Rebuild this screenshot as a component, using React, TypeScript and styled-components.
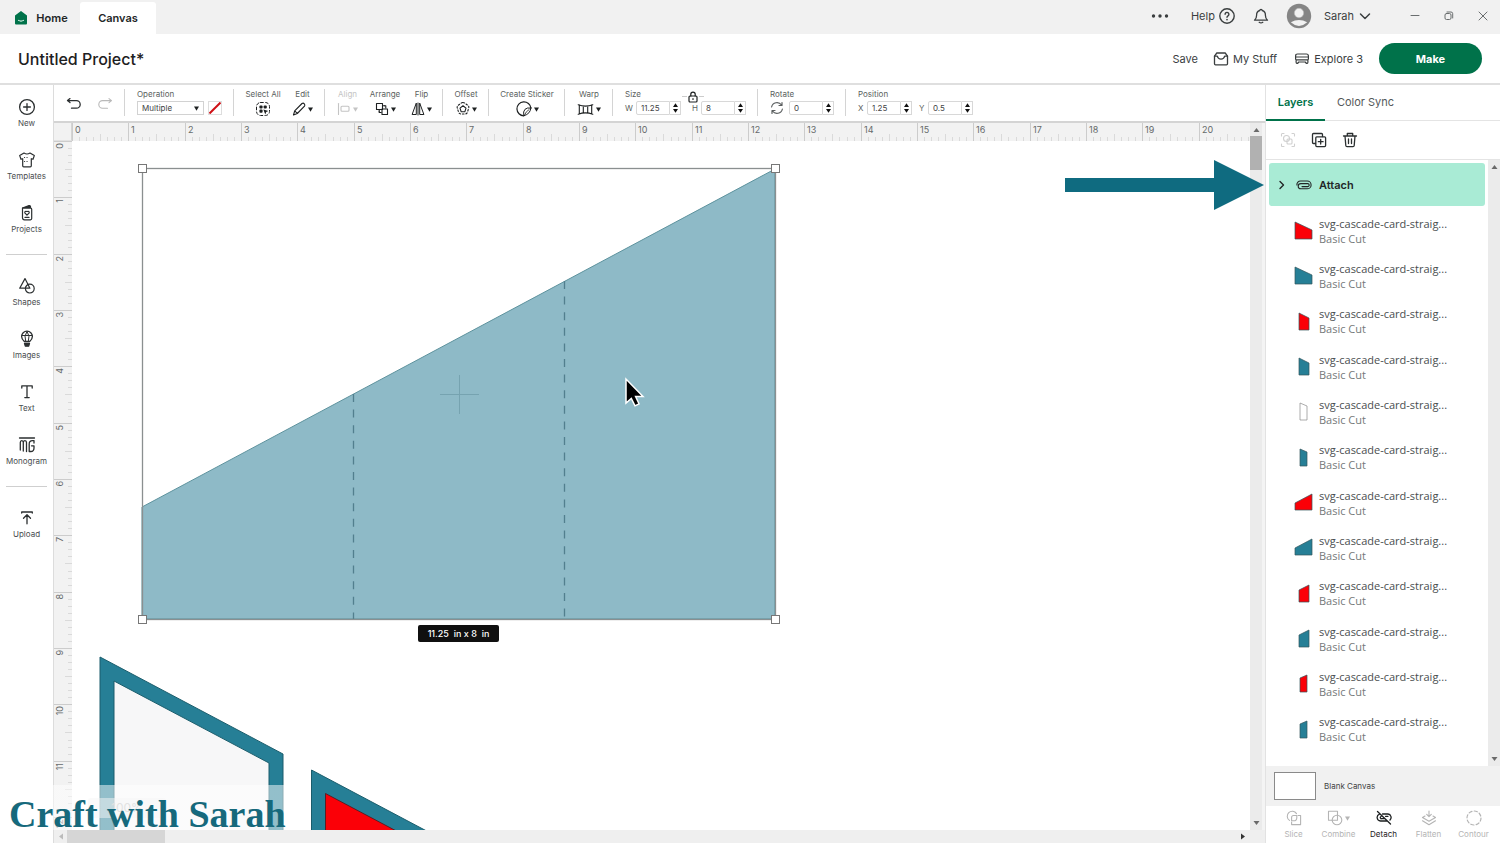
import React from "react";
import styled, { createGlobalStyle } from "styled-components";

const GlobalStyle = createGlobalStyle`
  *, *::before, *::after { box-sizing: border-box; }
  html, body, #root { height: 100%; }
  body {
    margin: 0;
    background: #ffffff;
    color: #3f4344;
    font-family: Inter, "Liberation Sans", sans-serif;
    font-size: 11px;
  }
  button, input, select { font: inherit; color: inherit; }
  button { border: 0; padding: 0; background: none; cursor: pointer; }
  a { color: inherit; text-decoration: none; }
  ul { list-style: none; margin: 0; padding: 0; }
  svg { display: block; flex: none; }
`;

/* ---------- icons ---------- */

type GlyphProps = {
  w?: number;
  h?: number;
  stroke?: number;
  children: React.ReactNode;
};

const Glyph = ({ w = 16, h = 16, stroke = 1.2, children }: GlyphProps) => (
  <svg
    width={w}
    height={h}
    viewBox={`0 0 ${w} ${h}`}
    fill="none"
    stroke="currentColor"
    strokeWidth={stroke}
    strokeLinecap="round"
    strokeLinejoin="round"
    aria-hidden="true"
  >
    {children}
  </svg>
);

const Caret = () => (
  <svg width="5" height="5" viewBox="0 0 5 5" aria-hidden="true">
    <path d="M0 .6h5L2.500 4.800z" fill="currentColor" />
  </svg>
);

const HomeIcon = () => (
  <svg width="14" height="14" viewBox="0 0 14 14" aria-hidden="true">
    <path d="M7 0 13 4.400V12.500q0 1-1 1H2q-1 0-1-1V4.400z" fill="#00724a" />
    <path d="M4.500 9.400q2.500 1.500 5 0" stroke="#d8f3e6" strokeWidth="1.100" fill="none" strokeLinecap="round" />
  </svg>
);

const HelpIcon = () => (
  <Glyph stroke={1.4}>
    <circle cx="8" cy="8" r="7.200" />
    <path d="M6.100 6.300a1.900 1.900 0 1 1 2.900 1.600q-1 .6-1 1.400" />
    <path d="M8 11.500v.1" strokeWidth="1.700" />
  </Glyph>
);

const BellIcon = () => (
  <Glyph stroke={1.3}>
    <path d="M1.500 12.200h13q-2.100-1.700-2.100-5A4.300 4.600 0 0 0 9.200 2.500a1.200 1.200 0 0 0-2.400 0A4.300 4.600 0 0 0 3.600 7.200q0 3.300-2.100 5z" />
    <path d="M6.200 14.300q1.800 1.300 3.600 0" />
  </Glyph>
);

const AvatarIcon = () => (
  <svg width="26" height="26" viewBox="0 0 26 26" aria-hidden="true">
    <circle cx="13" cy="13" r="12.200" fill="#858585" />
    <circle cx="13" cy="10" r="4.700" fill="#f1f1f1" stroke="#b5b5b5" strokeWidth=".6" />
    <path d="M4.800 19.300q8.200-4.700 16.400 0-8.200 7.400-16.400 0z" fill="#f1f1f1" />
  </svg>
);

const TrayIcon = () => (
  <Glyph stroke={1.3}>
    <path d="M1.500 5.200 3.800 2h8.400l2.300 3.200v7.600q0 1-1 1h-11q-1 0-1-1z" />
    <path d="M1.500 5.200h2.800q.8 3 3.700 3t3.700-3h2.800" />
  </Glyph>
);

const MachineIcon = () => (
  <Glyph stroke={1.2}>
    <path d="M1.600 8V5q0-2 2-2h8.800q2 0 2 2v3q0 .8-1 .8H2.600q-1 0-1-.8zM1.600 6h12.800M2.100 8.800v2.400q0 1.300 1.400 1.300l1.300-1.500h6.400l1.300 1.500q1.400 0 1.400-1.300V8.800" />
  </Glyph>
);

const navIcons: Record<string, React.ReactNode> = {
  New: (
    <Glyph w={18} h={18} stroke={1.3}>
      <circle cx="9" cy="9" r="7.400" />
      <path d="M9 5.600v6.800M5.600 9h6.800" />
    </Glyph>
  ),
  Templates: (
    <Glyph w={18} h={18} stroke={1.2}>
      <path d="M6 2 1.700 4.600 3 8.300l1.700-.6v7.100q0 1 1 1h6.600q1 0 1-1V7.700l1.700.6 1.300-3.700L12 2q-3 2-6 0z" />
      <path d="M6.500 6.500h5M6.500 10.500h5" strokeDasharray=".1 2.400" />
    </Glyph>
  ),
  Projects: (
    <Glyph w={18} h={18} stroke={1.2}>
      <path d="M4.500 4h8q1.200 0 1.200 1.200v9.400q0 1.200-1.200 1.200h-6q-2 0-2-2z" />
      <path d="M4.500 4 11 1.600q1.200-.3 1.500 1V4z" fill="currentColor" />
      <path d="M9 11.200 6.800 8.800q-.3-2 2.200-1.300 2.500-.7 2.200 1.300zM7 13.400h4" />
    </Glyph>
  ),
  Shapes: (
    <Glyph w={18} h={18} stroke={1.2}>
      <path d="M7 1.600 1.700 11.200h10.200z" />
      <circle cx="11.800" cy="11.600" r="4.400" />
    </Glyph>
  ),
  Images: (
    <Glyph w={18} h={18} stroke={1.3}>
      <path d="M6.300 11.500Q3.600 9.200 3.600 6.600a5.400 5.400 0 0 1 10.800 0q0 2.600-2.700 4.900z" />
      <path d="M7.600 11.300Q5.700 5.800 9 1.400q3.300 4.400 1.400 9.900M4 5.500h10" strokeWidth="1" />
      <path d="M6.500 13.300h5l-.8 2.900H7.300z" fill="currentColor" />
    </Glyph>
  ),
  Text: (
    <Glyph w={18} h={18} stroke={1.3}>
      <path d="M3.800 5V2.800h10.400V5M9 2.800v11.800M6.800 14.600h4.400" />
    </Glyph>
  ),
  Monogram: (
    <Glyph w={18} h={18} stroke={1.300}>
      <path d="M1.500 2h15M2.300 14V6.500Q2.300 4.600 3.800 4.600T5.300 6.500V15M5.300 6.500Q5.300 4.600 6.900 4.600T8.500 6.500V15.500M16 7V4.600h-1.500q-3.300 0-3.300 3.400v7.500h1.600q3.200 0 3.200-3.500v-2.200h-2.500" />
    </Glyph>
  ),
  Upload: (
    <Glyph w={18} h={18} stroke={1.300}>
      <path d="M3.700 4V3h10.600v1M9 14.800V6M5.500 9.300 9 5.800l3.500 3.500" />
    </Glyph>
  ),
};

const UndoIcon = () => (
  <Glyph stroke={1.3}>
    <path d="M1.800 5.600h8.600a3.800 3.800 0 0 1 0 7.600H5.500M1.500 5.600l2.500-2M1.500 5.600l2.500 2" />
  </Glyph>
);
const RedoIcon = () => (
  <Glyph stroke={1.1}>
    <path d="M14.200 5.600H5.600a3.800 3.800 0 0 0 0 7.600h4.900M14.500 5.600l-2.500-2M14.500 5.600l-2.500 2" />
  </Glyph>
);
const SelectAllIcon = () => (
  <Glyph stroke={1}>
    <rect x="1.500" y="1.500" width="13" height="13" rx="4" strokeDasharray="2.800 2.200" />
    <g fill="currentColor" stroke="none">
      <rect x="4.400" y="4.400" width="3.200" height="3.200" rx="1" />
      <rect x="8.600" y="4.400" width="3.200" height="3.200" rx="1" />
      <rect x="4.400" y="8.600" width="3.200" height="3.200" rx="1" />
      <path d="m8.400 8.400 5 1.700-2.200 1-.9 2.300z" />
    </g>
  </Glyph>
);
const PencilIcon = () => (
  <Glyph w={14} stroke={1.1}>
    <path d="m1.500 14 1.200-4.200L10 2.500q1.300-.8 2.300.3t.2 2.300l-7.200 7.400zM2.700 9.800l2.600 2.600" />
  </Glyph>
);
const AlignIcon = () => (
  <Glyph w={14} stroke={1.1}>
    <path d="M1.500 2.500v11" />
    <rect x="4" y="5.300" width="8" height="5" rx="1" />
  </Glyph>
);
const ArrangeIcon = () => (
  <Glyph w={14} stroke={1.1}>
    <rect x="1.500" y="2.500" width="6" height="6" />
    <path d="M9.500 4.800h1.300V7M4.200 10.300v1.200h2" />
    <rect x="7" y="8" width="5.500" height="5.500" />
    <path d="M4.200 8.500v1.800M7.500 4.800h2" />
  </Glyph>
);
const FlipIcon = () => (
  <Glyph w={14} stroke={1}>
    <path d="M5.300 2.500v11H1.500zM8.700 2.500v11h3.800zM7 2v12" />
  </Glyph>
);
const OffsetIcon = () => (
  <Glyph w={14} stroke={1.1}>
    <path d="M7 1.500q1.200 0 2.300 1l2.500 1.800q1.500 1 .9 2.800l-1.200 3.900q-.6 2-2.500 2H5q-1.900 0-2.500-2L1.300 7.100q-.6-1.800.9-2.800l2.500-1.800q1.100-1 2.300-1z" strokeDasharray="1.600 1.800" />
    <path d="m7 4.800 3 2.300-1.200 3.700H5.200L4 7.100z" />
  </Glyph>
);
const StickerIcon = () => (
  <Glyph w={16} stroke={1.200}>
    <path d="M14.900 7A7 7 0 1 0 7.800 14.800" />
    <path d="M14.900 7Q14.500 12.800 7.800 14.800 6.900 10.400 9 8.300 11 6.400 14.900 7z" strokeWidth="1" />
    <path d="M8.500 14q1.400-3.700 4.600-5.500" strokeWidth=".8" />
  </Glyph>
);
const WarpIcon = () => (
  <Glyph w={17} stroke={1.1}>
    <path d="M1.200 3.800q7.300 2.600 14.600 0M1.200 13.200q7.300-2.600 14.600 0M2.300 4v9M14.700 4v9M6.300 5v7M10.700 5v7" />
  </Glyph>
);
const LockIcon = () => (
  <Glyph w={10} h={12} stroke={1.200}>
    <rect x="1" y="5" width="8" height="6" rx="1" />
    <path d="M2.800 5V3.300a2.200 2.200 0 0 1 4.400 0V5M5 7.500v1" />
  </Glyph>
);
const RotateIcon = () => (
  <Glyph w={14} h={14} stroke={1.200}>
    <path d="M1.600 6A5.500 5.500 0 0 1 11.500 4M12.400 8A5.500 5.500 0 0 1 2.500 10M12 1.500v3H9M2 12.500v-3h3" />
  </Glyph>
);
const GroupIcon = () => (
  <Glyph stroke={1.1}>
    <path d="M1.500 4V1.500H4M12 1.500h2.500V4M14.500 12v2.500H12M4 14.500H1.500V12" strokeDasharray="2 1" />
    <circle cx="6.500" cy="6.500" r="3" />
    <rect x="7" y="7" width="5" height="5" rx="1" />
  </Glyph>
);
const DuplicateIcon = () => (
  <Glyph stroke={1.3}>
    <path d="M4.500 11.500h-2q-1 0-1-1v-8q0-1 1-1h8q1 0 1 1v2" />
    <rect x="4.800" y="4.800" width="9.800" height="9.800" rx="1" />
    <path d="M9.700 7.300v4.800M7.300 9.700h4.800" />
  </Glyph>
);
const TrashIcon = () => (
  <Glyph stroke={1.300}>
    <path d="M1.500 4h13M5.300 4V1.500h5.400V4M3 4l.8 9.500q.1 1.200 1.200 1.200h6q1.100 0 1.200-1.200L13 4M6.500 7v4.500M9.500 7v4.500" />
  </Glyph>
);
const ClipIcon = () => (
  <Glyph w={16} h={10} stroke={1.100}>
    <path d="M6 6.600h5.700a1.500 1.500 0 0 0 0-3H4.800a2.600 2.600 0 0 0 0 5.200h6.400a3.900 3.900 0 0 0 0-7.800H4.600A3.700 3.700 0 0 0 .9 5" />
  </Glyph>
);

const opIcons: Record<string, React.ReactNode> = {
  Slice: (
    <Glyph stroke={1.1}>
      <path d="M3.500 10.400A5 5 0 1 1 10.500 3.600M5.600 12v2.600h9V5.500H12" />
      <path d="M5.600 10.800V7.500q0-2 2-2h3.200v2.200q0 3.100-3.200 3.100z" />
    </Glyph>
  ),
  Combine: (
    <Glyph stroke={1.1}>
      <path d="M5 10.300H1.500v-9h9V5" />
      <circle cx="10" cy="10" r="4.800" />
      <path d="M5.200 10.300h5.300V5.200" />
    </Glyph>
  ),
  Detach: (
    <Glyph stroke={1.300}>
      <path d="M1.500 1.500 14.500 14M6.500 4H12a3.500 3.500 0 0 1 2 6M11 11H4.500a3.500 3.500 0 0 1-1-6.800M5 8.700h4M9.500 6.300H12M5 6.500q-1.500.9 0 2.200" />
    </Glyph>
  ),
  Flatten: (
    <Glyph stroke={1.1}>
      <path d="M8 1v5.500M5.700 4.300 8 6.600l2.300-2.300M4 6 1.500 7.500 8 11.300l6.500-3.800L12 6M1.500 10.800 8 14.800l6.500-4" />
    </Glyph>
  ),
  Contour: (
    <Glyph stroke={1.200}>
      <circle cx="8" cy="8" r="7" strokeDasharray="3.200 2.300" />
    </Glyph>
  ),
};

/* ---------- shell ---------- */

const Shell = styled.div`
  display: flex;
  flex-direction: column;
  height: 100vh;
  min-height: 700px;
  overflow: hidden;
`;

const TitleBar = styled.header`
  flex: none;
  display: flex;
  align-items: flex-end;
  height: 34px;
  padding-right: 10px;
  background: #f1f1f1;
`;

const WindowTab = styled.a<{ $active?: boolean }>`
  display: flex;
  align-items: center;
  justify-content: center;
  gap: 8px;
  width: ${(p) => (p.$active ? "76px" : "80px")};
  height: 32px;
  padding-left: ${(p) => (p.$active ? "0" : "2px")};
  border-radius: 3px 3px 0 0;
  background: ${(p) => (p.$active ? "#ffffff" : "transparent")};
  color: #232627;
  font-weight: 600;
`;

const WindowTools = styled.div`
  display: flex;
  align-items: center;
  align-self: flex-start;
  height: 32px;
  margin-left: auto;
`;

const BarButton = styled.button<{ $after: number; $faint?: boolean }>`
  display: flex;
  align-items: center;
  gap: 4px;
  margin-right: ${(p) => p.$after}px;
  color: ${(p) => (p.$faint ? "#6a6e6f" : "#3a3e3f")};
  font-size: 11px;
`;

const ProjectBar = styled.div`
  flex: none;
  display: flex;
  align-items: center;
  height: 51px;
  padding: 0 18px;
  border-bottom: 2px solid #dfdfdf;
`;

const ProjectName = styled.h1`
  margin: 0 auto 0 0;
  color: #1d2021;
  font-size: 16px;
  font-weight: 500;
`;

const MakeButton = styled.button`
  width: 103px;
  height: 31px;
  border-radius: 16px;
  background: #00724a;
  color: #ffffff;
  font-weight: 700;
`;

const Body = styled.div`
  flex: 1;
  display: flex;
  min-height: 0;
`;

/* ---------- left navigation ---------- */

const Nav = styled.nav`
  flex: none;
  width: 54px;
  border-right: 1px solid #dcdcdc;
`;

const NavButton = styled.button`
  display: flex;
  flex-direction: column;
  align-items: center;
  gap: 2px;
  width: 53px;
  height: 53px;
  padding-top: 13px;
  color: #2b2f30;
  font-size: 8px;
  line-height: 10px;
`;

const NavLabel = styled.span`
  color: #4a4e4f;
`;

const NavRule = styled.hr`
  height: 1px;
  margin: 10px 6px 9px;
  border: 0;
  background: #cfcfcf;
`;

/* ---------- toolbar ---------- */

const Centre = styled.main`
  position: relative;
  flex: 1;
  display: flex;
  flex-direction: column;
  min-width: 0;
`;

const Toolbar = styled.div`
  flex: none;
  display: flex;
  align-items: flex-start;
  height: 38px;
  padding-top: 4px;
  border-bottom: 2px solid #d4d4d4;
  font-size: 8px;
`;

const ToolGroup = styled.div<{ $gap?: number; $last?: boolean }>`
  position: relative;
  display: flex;
  gap: ${(p) => p.$gap ?? 12}px;
  height: 27px;
  padding: 0 11px 0 12px;
  border-right: ${(p) => (p.$last ? "0" : "1px solid #d4d4d4")};
`;

const HistoryButton = styled.button<{ $off?: boolean }>`
  align-self: center;
  color: ${(p) => (p.$off ? "#b9b9b9" : "#2b2f30")};
`;

const Tool = styled.div<{ $w: number }>`
  display: flex;
  flex-direction: column;
  width: ${(p) => p.$w}px;
`;

const ToolLabel = styled.span`
  height: 12px;
  color: #5b5f60;
  line-height: 10px;
  white-space: nowrap;
`;

const ToolButton = styled.button<{ $w: number; $off?: boolean }>`
  display: flex;
  flex-direction: column;
  align-items: center;
  width: ${(p) => p.$w}px;
  height: 28px;
  color: ${(p) => (p.$off ? "#c4c4c4" : "#1d2021")};

  ${ToolLabel} {
    color: ${(p) => (p.$off ? "#c4c4c4" : "#5b5f60")};
  }
`;

const ToolFace = styled.span`
  display: flex;
  align-items: center;
  gap: 2px;
  height: 16px;
`;

const FieldRow = styled.div<{ $gap: number }>`
  display: flex;
  align-items: center;
  gap: ${(p) => p.$gap}px;
  height: 16px;
`;

const SelectWrap = styled.span`
  position: relative;
  display: flex;
  align-items: center;

  svg {
    position: absolute;
    right: 5px;
    color: #1d2021;
    pointer-events: none;
  }
`;

const Select = styled.select`
  appearance: none;
  width: 67px;
  height: 14px;
  padding: 0 4px;
  border: 1px solid #d2d2d2;
  border-radius: 0;
  background: #ffffff;
  line-height: 12px;
`;

const NoFill = styled.button`
  border: 1px solid #dddddd;
`;

const Field = styled.label`
  display: flex;
  align-items: center;
  color: #5b5f60;
`;

const FieldName = styled.span<{ $w: number }>`
  width: ${(p) => p.$w}px;
`;

const NumberInput = styled.input`
  width: 34px;
  height: 14px;
  padding: 0 4px;
  border: 1px solid #d8d8d8;
  border-radius: 2px 0 0 2px;
  outline: 0;
  background: #ffffff;
  color: #3f4344;
`;

const Stepper = styled.span`
  display: flex;
  align-items: center;
  justify-content: center;
  width: 11px;
  height: 14px;
  border: 1px solid #d8d8d8;
  border-left: 0;
  color: #111111;
`;

/* Sits above the gap between the width and height fields. */
const LockButton = styled.button`
  position: absolute;
  left: 69px;
  top: 2px;
  display: flex;
  gap: 1px;
  color: #1d2021;
`;

const LockTie = styled.span`
  width: 5px;
  height: 4px;
  margin-top: 5px;
  border-top: 1px solid #cccccc;
`;

/* ---------- canvas ---------- */

const CanvasArea = styled.div`
  flex: 1;
  display: flex;
  min-height: 0;
`;

const CanvasGrid = styled.div`
  flex: 1;
  display: grid;
  grid-template-columns: 18px 1fr;
  grid-template-rows: 18px 1fr;
  min-width: 0;
  min-height: 0;
`;

const Corner = styled.div`
  background: #f2f2f2;
  border-right: 1px solid #d4d4d4;
  border-bottom: 1px solid #e2e2e2;
`;

const RulerStrip = styled.div`
  overflow: hidden;
  min-width: 0;
  min-height: 0;
  background: #f2f2f2;
`;

const Mat = styled.div`
  position: relative;
  overflow: hidden;
  min-height: 0;
  background: #ffffff;
`;

const SizeBadge = styled.div`
  position: absolute;
  left: 346px;
  top: 484px;
  width: 81px;
  border-radius: 2px;
  background: #101010;
  color: #ffffff;
  font-size: 9px;
  font-weight: 500;
  line-height: 17px;
  text-align: center;
  white-space: pre;
`;

const Pointer = styled.svg`
  position: absolute;
  left: 552px;
  top: 236px;
`;

const ZoomLevel = styled.div`
  position: absolute;
  left: 16px;
  bottom: 12px;
  width: 78px;
  border-radius: 3px;
  background: rgba(236, 236, 236, 0.5);
  color: #c4c4c4;
  font-size: 12px;
  line-height: 20px;
  text-align: center;
`;

const VScroll = styled.div<{ $edge?: boolean }>`
  flex: none;
  display: flex;
  flex-direction: column;
  align-items: center;
  justify-content: space-between;
  width: ${(p) => (p.$edge ? 15 : 12)}px;
  padding: 5px 0;
  border-right: ${(p) => (p.$edge ? "3px solid #f4f4f4" : "0")};
  background: #ebebeb;
  color: #6a6a6a;
`;

const VThumb = styled.div`
  width: 12px;
  height: 34px;
  margin: 4px 0 auto;
  background: #b1b1b1;
`;

const HScroll = styled.div`
  flex: none;
  display: flex;
  align-items: center;
  height: 13px;
  padding: 0 20px 0 5px;
  background: #efefef;
  color: #333333;
`;

const HThumb = styled.div`
  width: 98px;
  height: 13px;
  margin: 0 auto 0 4px;
  background: #d6d6d6;
`;

const Callout = styled.svg`
  position: absolute;
  right: 1px;
  top: 75px;
`;

const Watermark = styled.div`
  position: absolute;
  left: 0;
  bottom: 0;
  width: 284px;
  height: 58px;
  padding: 6px 0 0 9px;
  background: linear-gradient(rgba(255, 255, 255, 0.5) 45px, transparent 45px);
  color: #16697c;
  font-family: "Liberation Serif", serif;
  font-size: 38px;
  font-weight: 700;
  line-height: 46px;
  white-space: nowrap;
  pointer-events: none;
`;

/* ---------- layers panel ---------- */

const Panel = styled.aside`
  flex: none;
  display: flex;
  flex-direction: column;
  width: 235px;
  border-left: 1px solid #e2e2e2;
`;

const PanelTabs = styled.div`
  flex: none;
  display: flex;
  height: 36px;
  border-bottom: 1px solid #e4e4e4;
`;

const PanelTab = styled.button<{ $active?: boolean; $w: number }>`
  width: ${(p) => p.$w}px;
  height: 36px;
  border-bottom: 2px solid ${(p) => (p.$active ? "#00724a" : "transparent")};
  color: ${(p) => (p.$active ? "#00724a" : "#55595a")};
  font-weight: ${(p) => (p.$active ? 600 : 400)};
`;

const PanelActions = styled.div`
  flex: none;
  display: flex;
  align-items: center;
  gap: 15px;
  height: 39px;
  padding-left: 14px;
  border-bottom: 1px solid #e4e4e4;
`;

const IconButton = styled.button<{ $off?: boolean }>`
  color: ${(p) => (p.$off ? "#d0d0d0" : "#2b2f30")};
`;

const PanelScroll = styled.div`
  flex: 1;
  display: flex;
  min-height: 0;
`;

const LayerColumn = styled.div`
  flex: 1;
  display: flex;
  flex-direction: column;
  min-width: 0;
  padding: 3px 3px 14px;
`;

const AttachRow = styled.button`
  flex: none;
  display: flex;
  align-items: center;
  height: 43px;
  padding-left: 8px;
  border-radius: 3px;
  background: #a9ebd5;
  color: #232627;
  font-weight: 600;

  svg:first-child { margin-right: 10px; }
  svg + svg { margin-right: 7px; }
`;

const LayerList = styled.ul`
  flex: 1;
  display: grid;
  grid-auto-rows: 1fr;
  padding-top: 2px;
`;

const LayerRow = styled.li`
  display: flex;
  align-items: center;
  gap: 6px;
  padding-left: 25px;
`;

const LayerText = styled.div`
  font-family: "Open Sans", "Liberation Sans", sans-serif;
  font-size: 11px;
  line-height: 15px;
`;

const LayerName = styled.div`
  color: #4a4e4f;
`;

const LayerKind = styled.div`
  color: #75797a;
`;

const CanvasColor = styled.div`
  flex: none;
  display: flex;
  align-items: center;
  gap: 8px;
  height: 40px;
  padding-left: 8px;
  background: #f1f1f1;
  font-size: 8px;
`;

const ColorSwatch = styled.button`
  width: 42px;
  height: 28px;
  border: 1px solid #8a8a8a;
  background: #ffffff;
`;

const Operations = styled.div`
  flex: none;
  display: flex;
  height: 37px;
  padding: 0 4px 0 5px;
`;

const OperationButton = styled.button<{ $on?: boolean }>`
  flex: 1;
  display: flex;
  flex-direction: column;
  align-items: center;
  justify-content: center;
  gap: 3px;
  color: ${(p) => (p.$on ? "#1d2021" : "#b4b4b4")};
  font-size: 8px;
  line-height: 10px;
`;

/* ---------- data ---------- */

const INCH = 56.33;
const TEAL = "#267f96";
const RED = "#fb0007";

const layers = [
  { shape: "1,1 18,9 18,18 1,18", fill: RED },
  { shape: "1,1 18,9 18,18 1,18", fill: TEAL },
  { shape: "5,1 15,6 15,18 5,18", fill: RED },
  { shape: "5,1 15,6 15,18 5,18", fill: TEAL },
  { shape: "6,1 13,4 13,18 6,18", fill: "#ffffff" },
  { shape: "6,1 13,4 13,18 6,18", fill: TEAL },
  { shape: "1,10 18,1 18,17 1,17", fill: RED },
  { shape: "1,10 18,1 18,17 1,17", fill: TEAL },
  { shape: "5,6 15,1 15,18 5,18", fill: RED },
  { shape: "5,6 15,1 15,18 5,18", fill: TEAL },
  { shape: "6,4 13,1 13,18 6,18", fill: RED },
  { shape: "6,4 13,1 13,18 6,18", fill: TEAL },
];

const navGroups = [
  ["New", "Templates", "Projects"],
  ["Shapes", "Images", "Text", "Monogram"],
  ["Upload"],
];

/* ---------- parts ---------- */

const Ruler = ({ vertical = false, last }: { vertical?: boolean; last: number }) => {
  const marks = Array.from({ length: (last + 1) * 8 }, (_, i) => i);
  return (
    <svg width={vertical ? 18 : 1240} height={vertical ? 1240 : 18} aria-hidden="true">
      {marks.map((i) => {
        const at = Math.round((i * INCH) / 8) + 0.5;
        const size = i % 8 === 0 ? 18 : i % 4 === 0 ? 7 : 4;
        const color = i % 8 === 0 ? "#cccccc" : "#dadada";
        return vertical ? (
          <line key={i} x1={18 - size} x2={18} y1={at} y2={at} stroke={color} />
        ) : (
          <line key={i} y1={18 - size} y2={18} x1={at} x2={at} stroke={color} />
        );
      })}
      {marks
        .filter((i) => i % 8 === 0)
        .map((i) => {
          const at = Math.round((i * INCH) / 8) + 3;
          return (
            <text
              key={i}
              fontSize="9"
              fill="#666a6b"
              x={vertical ? undefined : at}
              y={vertical ? undefined : 10}
              textAnchor={vertical ? "end" : "start"}
              transform={vertical ? `translate(9 ${at - 1}) rotate(-90)` : undefined}
            >
              {i / 8}
            </text>
          );
        })}
    </svg>
  );
};

const Artwork = () => (
  <svg width="100%" height="100%" aria-label="Cascade card pieces">
    <polygon points="70,366 703,28 703,478 70,478" fill="#8ebac7" stroke="#5d929d" />
    <path d="M281.500 253V478M492.500 140V478" stroke="#527f8e" strokeWidth="1.300" strokeDasharray="8 7.600" />
    <path d="M368 253.500h39M387.500 234v39" stroke="#76a3b0" />
    <rect x="70.500" y="27.500" width="633" height="451" fill="none" stroke="#8a8f90" strokeWidth="1.300" />
    {[
      [70, 27],
      [703, 27],
      [70, 478],
      [703, 478],
    ].map(([x, y]) => (
      <rect key={`${x}-${y}`} x={x - 3.5} y={y - 3.5} width="8" height="8" fill="#ffffff" stroke="#777777" />
    ))}
    <polygon points="28,516 211,613 211,1000 28,1000" fill={TEAL} stroke="#1b5d6c" />
    <polygon points="42,540 197,622 197,1000 42,1000" fill="#f7f7f8" stroke="#1b5d6c" />
    <polygon points="239.500,629 500,767 500,1000 239.500,1000" fill={TEAL} stroke="#1b5d6c" />
    <polygon points="253.500,652.500 500,783 500,1000 253.500,1000" fill={RED} stroke="#5b1d24" />
  </svg>
);

type NumberFieldProps = { name?: React.ReactNode; title: string; w: number; value: string };
const NumberField = ({ name, title, w, value }: NumberFieldProps) => (
  <Field>
    <FieldName $w={w}>{name}</FieldName>
    <NumberInput aria-label={title} defaultValue={value} />
    <Stepper>
      <svg width="5" height="10" viewBox="0 0 5 10" fill="currentColor" aria-hidden="true">
        <path d="M2.500 .3 5 4H0zM0 6h5L2.500 9.700z" />
      </svg>
    </Stepper>
  </Field>
);

const ScrollUp = () => (
  <svg width="7" height="4" viewBox="0 0 7 4" fill="currentColor" aria-hidden="true">
    <path d="M3.500 0 6.500 4h-6z" />
  </svg>
);
const ScrollDown = () => (
  <svg width="7" height="4" viewBox="0 0 7 4" fill="currentColor" aria-hidden="true">
    <path d="M.5 0h6l-3 4z" />
  </svg>
);

type DropToolProps = { label: string; w: number; off?: boolean; caret?: boolean; icon: React.ReactNode };
const DropTool = ({ label, w, off, caret = true, icon }: DropToolProps) => (
  <ToolButton $w={w} $off={off} disabled={off}>
    <ToolLabel>{label}</ToolLabel>
    <ToolFace>
      {icon}
      {caret && <Caret />}
    </ToolFace>
  </ToolButton>
);

export default function App() {
  return (
    <Shell>
      <GlobalStyle />
      <TitleBar>
        <WindowTab href="#home">
          <HomeIcon />
          Home
        </WindowTab>
        <WindowTab href="#canvas" $active>
          Canvas
        </WindowTab>
        <WindowTools>
          <BarButton $after={22} aria-label="More">
            <Glyph w={18} h={4} stroke={0}>
              <g fill="currentColor">
                <circle cx="2.500" cy="2" r="1.700" />
                <circle cx="9" cy="2" r="1.700" />
                <circle cx="15.500" cy="2" r="1.700" />
              </g>
            </Glyph>
          </BarButton>
          <BarButton $after={18}>
            Help
            <HelpIcon />
          </BarButton>
          <BarButton $after={17} aria-label="Notifications">
            <BellIcon />
          </BarButton>
          <BarButton $after={12} aria-label="Account">
            <AvatarIcon />
          </BarButton>
          <BarButton $after={38}>
            Sarah
            <Glyph w={14} h={10} stroke={1.500}>
              <path d="M2.500 3 7 7.500 11.500 3" />
            </Glyph>
          </BarButton>
          <BarButton $after={24} $faint aria-label="Minimise">
            <Glyph w={10} h={10} stroke={1}>
              <path d="M1 4.500h8" />
            </Glyph>
          </BarButton>
          <BarButton $after={24} $faint aria-label="Restore">
            <Glyph w={10} h={10} stroke={1}>
              <rect x="1" y="2.500" width="6" height="6" rx="1.500" />
              <path d="M3 1h4q1.700 0 1.700 1.700V7" />
            </Glyph>
          </BarButton>
          <BarButton $after={2} $faint aria-label="Close">
            <Glyph w={10} h={10} stroke={1}>
              <path d="m1 1 8 8M9 1 1 9" />
            </Glyph>
          </BarButton>
        </WindowTools>
      </TitleBar>

      <ProjectBar>
        <ProjectName>Untitled Project*</ProjectName>
        <BarButton $after={15}>Save</BarButton>
        <BarButton $after={17}>
          <TrayIcon />
          My Stuff
        </BarButton>
        <BarButton $after={16}>
          <MachineIcon />
          Explore 3
        </BarButton>
        <MakeButton>Make</MakeButton>
      </ProjectBar>

      <Body>
        <Nav>
          {navGroups.map((group, g) => (
            <React.Fragment key={g}>
              {g > 0 && <NavRule />}
              {group.map((label) => (
                <NavButton key={label}>
                  {navIcons[label]}
                  <NavLabel>{label}</NavLabel>
                </NavButton>
              ))}
            </React.Fragment>
          ))}
        </Nav>

        <Centre>
          <Toolbar>
            <ToolGroup $gap={15}>
              <HistoryButton aria-label="Undo">
                <UndoIcon />
              </HistoryButton>
              <HistoryButton $off aria-label="Redo">
                <RedoIcon />
              </HistoryButton>
            </ToolGroup>
            <ToolGroup>
              <Tool $w={85}>
                <ToolLabel as="label" htmlFor="operation">
                  Operation
                </ToolLabel>
                <FieldRow $gap={4}>
                  <SelectWrap>
                    <Select id="operation" defaultValue="Multiple">
                      <option>Multiple</option>
                    </Select>
                    <Caret />
                  </SelectWrap>
                  <NoFill aria-label="No fill">
                    <svg width="12" height="12" viewBox="0 0 12 12" aria-hidden="true">
                      <path d="M.5 11.500 11.500.5" stroke="#cf1016" strokeWidth="2" />
                    </svg>
                  </NoFill>
                </FieldRow>
              </Tool>
            </ToolGroup>
            <ToolGroup>
              <DropTool label="Select All" w={34} caret={false} icon={<SelectAllIcon />} />
              <DropTool label="Edit" w={21} icon={<PencilIcon />} />
            </ToolGroup>
            <ToolGroup>
              <DropTool label="Align" w={21} off icon={<AlignIcon />} />
              <DropTool label="Arrange" w={30} icon={<ArrangeIcon />} />
              <DropTool label="Flip" w={19} icon={<FlipIcon />} />
            </ToolGroup>
            <ToolGroup>
              <DropTool label="Offset" w={22} icon={<OffsetIcon />} />
            </ToolGroup>
            <ToolGroup>
              <DropTool label="Create Sticker" w={52} icon={<StickerIcon />} />
            </ToolGroup>
            <ToolGroup>
              <DropTool label="Warp" w={24} icon={<WarpIcon />} />
            </ToolGroup>
            <ToolGroup $gap={11}>
              <Tool $w={56}>
                <ToolLabel>Size</ToolLabel>
                <FieldRow $gap={0}>
                  <NumberField name="W" title="Width" w={11} value="11.25" />
                </FieldRow>
              </Tool>
              <Tool $w={54}>
                <ToolLabel />
                <FieldRow $gap={0}>
                  <NumberField name="H" title="Height" w={9} value="8" />
                </FieldRow>
              </Tool>
              <LockButton aria-label="Lock proportions">
                <LockTie />
                <LockIcon />
                <LockTie />
              </LockButton>
            </ToolGroup>
            <ToolGroup>
              <Tool $w={64}>
                <ToolLabel>Rotate</ToolLabel>
                <FieldRow $gap={0}>
                  <NumberField name={<RotateIcon />} title="Rotation" w={19} value="0" />
                </FieldRow>
              </Tool>
            </ToolGroup>
            <ToolGroup $last>
              <Tool $w={116}>
                <ToolLabel>Position</ToolLabel>
                <FieldRow $gap={7}>
                  <NumberField name="X" title="Horizontal position" w={9} value="1.25" />
                  <NumberField name="Y" title="Vertical position" w={9} value="0.5" />
                </FieldRow>
              </Tool>
            </ToolGroup>
          </Toolbar>

          <CanvasArea>
            <CanvasGrid>
              <Corner />
              <RulerStrip>
                <Ruler last={20} />
              </RulerStrip>
              <RulerStrip>
                <Ruler vertical last={12} />
              </RulerStrip>
              <Mat>
                <Artwork />
                <SizeBadge>11.25  in x 8  in</SizeBadge>
                <Pointer width="22" height="30" viewBox="0 0 22 30" aria-hidden="true">
                  <path
                    d="M2 2v24l5.300-4.600 3.700 7.400 4-2-3.400-7.200H19z"
                    fill="#000000"
                    stroke="#ffffff"
                    strokeWidth="1.500"
                  />
                </Pointer>
                <ZoomLevel>100%</ZoomLevel>
              </Mat>
            </CanvasGrid>
            <VScroll $edge>
              <ScrollUp />
              <VThumb />
              <ScrollDown />
            </VScroll>
          </CanvasArea>
          <HScroll>
            <svg width="4" height="7" viewBox="0 0 4 7" fill="#bbbbbb" aria-hidden="true">
              <path d="M4 .5v6l-4-3z" />
            </svg>
            <HThumb />
            <svg width="4" height="7" viewBox="0 0 4 7" fill="currentColor" aria-hidden="true">
              <path d="M0 .5v6l4-3z" />
            </svg>
          </HScroll>
          <Callout width="199" height="50" viewBox="0 0 199 50" aria-hidden="true">
            <path d="M0 18h149V0l50 25-50 25V32H0z" fill="#0f6b80" />
          </Callout>
        </Centre>

        <Panel>
          <PanelTabs>
            <PanelTab $active $w={59}>
              Layers
            </PanelTab>
            <PanelTab $w={81}>Color Sync</PanelTab>
          </PanelTabs>
          <PanelActions>
            <IconButton $off aria-label="Group">
              <GroupIcon />
            </IconButton>
            <IconButton aria-label="Duplicate">
              <DuplicateIcon />
            </IconButton>
            <IconButton aria-label="Delete">
              <TrashIcon />
            </IconButton>
          </PanelActions>
          <PanelScroll>
            <LayerColumn>
              <AttachRow>
                <Glyph w={9} h={10} stroke={1.400}>
                  <path d="M3 1.500 6.500 5 3 8.500" />
                </Glyph>
                <ClipIcon />
                Attach
              </AttachRow>
              <LayerList>
                {layers.map((layer, i) => (
                  <LayerRow key={i}>
                    <svg width="19" height="19" viewBox="0 0 19 19" aria-hidden="true">
                      <polygon
                        points={layer.shape}
                        fill={layer.fill}
                        stroke={layer.fill === "#ffffff" ? "#8a8a8a" : "#33555c"}
                        strokeOpacity=".7"
                      />
                    </svg>
                    <LayerText>
                      <LayerName>svg-cascade-card-straig...</LayerName>
                      <LayerKind>Basic Cut</LayerKind>
                    </LayerText>
                  </LayerRow>
                ))}
              </LayerList>
            </LayerColumn>
            <VScroll>
              <ScrollUp />
              <ScrollDown />
            </VScroll>
          </PanelScroll>
          <CanvasColor>
            <ColorSwatch aria-label="Canvas color" />
            Blank Canvas
          </CanvasColor>
          <Operations>
            {Object.keys(opIcons).map((label) => (
              <OperationButton key={label} $on={label === "Detach"}>
                <ToolFace>
                  {opIcons[label]}
                  {label === "Combine" && <Caret />}
                </ToolFace>
                {label}
              </OperationButton>
            ))}
          </Operations>
        </Panel>
      </Body>
      <Watermark>Craft with Sarah</Watermark>
    </Shell>
  );
}
